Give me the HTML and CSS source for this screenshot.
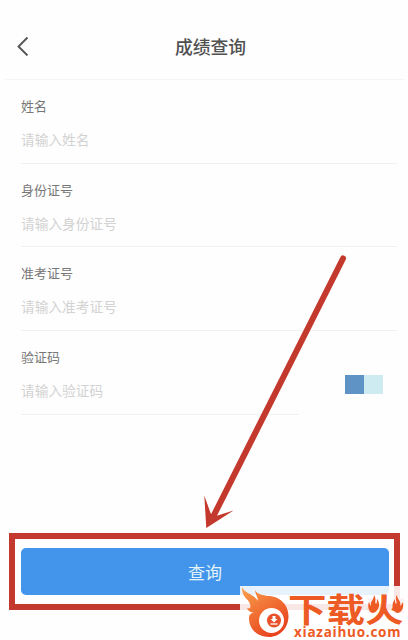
FILE: index.html
```html
<!DOCTYPE html>
<html lang="zh-CN">
<head>
    <meta charset="UTF-8">
    <meta name="viewport" content="width=device-width, initial-scale=1.0">
    <title>成绩查询</title>
    <link rel="stylesheet" href="styles.css">
</head>
<body>
    <div class="page">
        <header class="header">
            <svg class="back" width="12" height="20" viewBox="0 0 12 20">
                <path d="M10.5 1.500 L1.5 10.500 L10.5 19.500" fill="none" stroke="#555" stroke-width="1.9"/>
            </svg>
            <h1>成绩查询</h1>
        </header>
        <form class="form">
            <div class="field">
                <label for="name">姓名</label>
                <input type="text" id="name" placeholder="请输入姓名">
            </div>
            <div class="field">
                <label for="idcard">身份证号</label>
                <input type="text" id="idcard" placeholder="请输入身份证号">
            </div>
            <div class="field">
                <label for="ticket">准考证号</label>
                <input type="text" id="ticket" placeholder="请输入准考证号">
            </div>
            <div class="code-row">
                <div class="field code-field">
                    <label for="code">验证码</label>
                    <input type="text" id="code" placeholder="请输入验证码">
                </div>
                <div class="captcha">
                    <span class="dark"></span>
                    <span class="light"></span>
                </div>
            </div>
        </form>
        <div class="highlight">
            <button class="query-btn" type="button">查询</button>
        </div>

        <svg class="arrow" width="408" height="640" viewBox="0 0 408 640">
            <line x1="343" y1="258.500" x2="213" y2="517" stroke="#c4392d" stroke-width="6" stroke-linecap="round"/>
            <path d="M206.300 528 L204.300 495.500 L210.700 513.500 L216 516 L233.500 510.500 Z" fill="#c4392d"/>
        </svg>

        <div class="watermark">
            <svg class="flame" width="50" height="54" viewBox="0 0 50 54">
                <defs>
                    <linearGradient id="fire" x1="0" y1="0" x2="0.6" y2="1">
                        <stop offset="0" stop-color="#f9a04a"/>
                        <stop offset="1" stop-color="#e9441f"/>
                    </linearGradient>
                </defs>
                <path d="M2 1 C5 8 14 8 18 15 C18 11 15 8 15 4 C18 9 23 9 28 10 C40 10 48.500 19 48.500 30 C48.500 42 40 51 29 51 C17 51 9 43 9 32 C9 28 12 27 14 26 C11 27 8 25 7 22 C10 23 11 22 10 18 C8 12 2 12 2 1 Z" fill="url(#fire)"/>
                <circle cx="31.500" cy="34.500" r="12.500" fill="#fff"/>
                <circle cx="34" cy="34.500" r="7" fill="#e9512a"/>
                <path d="M34 30 V33" stroke="#fff" stroke-width="3"/>
                <path d="M30.500 33 H37.500 L34 36.500 Z" fill="#fff"/>
                <path d="M30.500 38 H37.500" stroke="#fff" stroke-width="1.300"/>
            </svg>
            <div class="brand">
                <div class="brand-name">下载火</div>
                <div class="brand-url">xiazaihuo.com</div>
            </div>
            <!-- flames over the two dots of the last character -->
            <svg class="sparks" width="36" height="22" viewBox="0 0 36 22">
                <path d="M0 4 H10 V19 H0 Z M26 4 H36 V19 H26 Z" fill="#fbf3f3"/>
                <path d="M6 1 C9 5 6 8 8 10 C9 9 9 7 9 5 C13 10 11 17 5 19 C1 19 -1 13 1 8 C2 10 2 11 3 12 C2 7 6 6 6 1 Z" fill="#ed5a24"/>
                <path d="M29 1 C26 5 30 8 28 10 C27 9 27 7 27 5 C23 10 24 17 29 19 C34 19 36 13 35 8 C34 10 33 11 32 12 C34 7 29 6 29 1 Z" fill="#ed5a24"/>
            </svg>
        </div>
    </div>
</body>
</html>
```
FILE: styles.css
```css
* {
    box-sizing: border-box;
}
body {
    margin: 0;
    background: #fefefe;
    font-family: "Noto Sans CJK SC", sans-serif;
}
.page {
    position: relative;
    width: 408px;
    height: 640px;
    overflow: hidden;
}
.header {
    display: grid;
    grid-template-columns: 30px 1fr 24px;
    align-items: center;
    height: 80px;
    margin: 0 4px 0 5px;
    padding: 13px 6px 0 12px;
    border-bottom: 1px solid #f5f5f5;
}
.header h1 {
    margin: 0;
    color: #505050;
    font-size: 17.800px;
    font-weight: 500;
    line-height: 26px;
    text-align: center;
}
.form {
    padding: 0 11px 0 21px;
}
.field {
    height: 83.700px;
    padding-top: 16px;
    border-bottom: 1px solid #f1f1f1;
}
.field label {
    display: block;
    color: #777;
    font-size: 13px;
    line-height: 20px;
}
.field input {
    display: block;
    width: 100%;
    height: 20px;
    margin-top: 13px;
    padding: 0;
    border: none;
    outline: none;
    background: transparent;
    font-family: inherit;
    font-size: 13.700px;
}
.field input::placeholder {
    color: #d2d2d2;
}
.code-row {
    display: flex;
    justify-content: space-between;
}
.code-field {
    width: 278px;
}
.captcha {
    display: flex;
    margin: 44px 14px 0 0;
}
.captcha span {
    width: 19px;
    height: 19px;
}
.captcha .dark {
    background: #5f93c6;
}
.captcha .light {
    background: #cfebf2;
}
.highlight {
    height: 77px;
    margin: 118px 8px 0 9px;
    padding: 9px 5px 9px 6px;
    border: 6px solid #c4392d;
}
.query-btn {
    display: block;
    width: 100%;
    height: 47px;
    padding: 0;
    border: none;
    border-radius: 5px;
    background: #4395eb;
    color: #e2f4f8;
    font-family: inherit;
    font-size: 17px;
}
.arrow {
    position: absolute;
    left: 0;
    top: 0;
}
.watermark {
    position: absolute;
    left: 240px;
    top: 586px;
    display: flex;
    width: 162px;
    height: 54px;
    background: rgba(255, 255, 255, 0.88);
}
.flame {
    flex: none;
}
.brand {
    width: 112px;
    color: #ed5a24;
}
.brand-name {
    height: 41px;
    margin-left: -2px;
    font-size: 38.500px;
    font-weight: 700;
    line-height: 42px;
    white-space: nowrap;
    transform: scaleY(0.85);
    transform-origin: 0 24px;
}
.brand-url {
    padding-left: 4px;
    font-family: "Open Sans", sans-serif;
    font-size: 13.500px;
    font-weight: 700;
    letter-spacing: 0.750px;
    line-height: 11px;
}
.sparks {
    position: absolute;
    left: 128px;
    top: 8px;
}
```
